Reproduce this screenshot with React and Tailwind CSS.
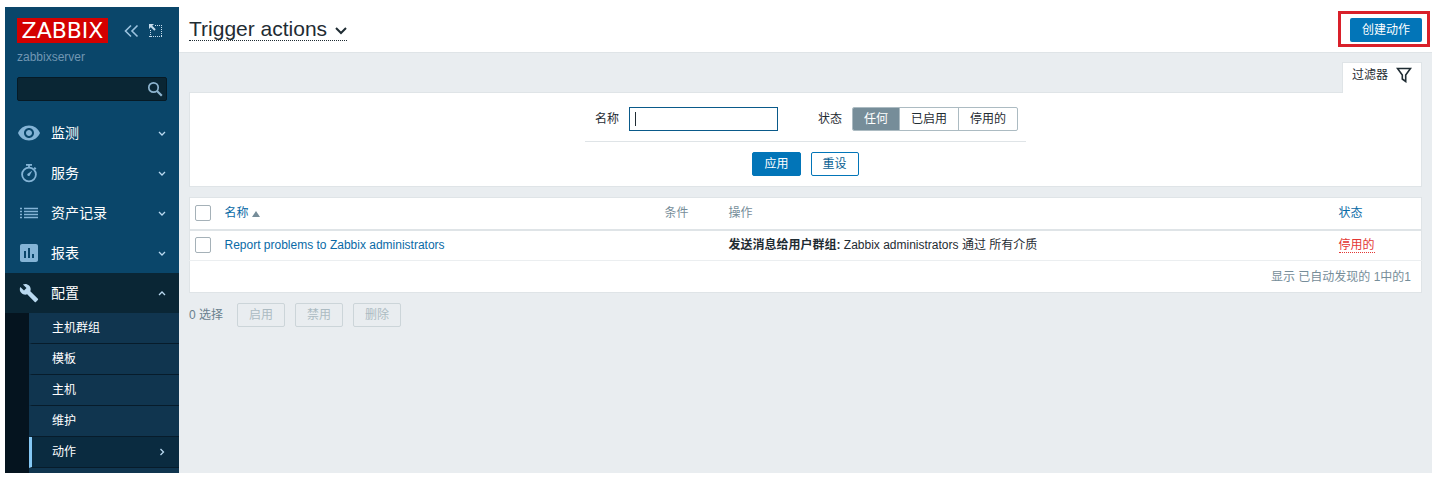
import { useState } from "react";
import clsx from "clsx";
import { MdAssessment, MdBuild, MdVisibility } from "react-icons/md";

// Stopwatch icon of the services section
function StopwatchIcon({ className }) {
  return (
    <svg viewBox="0 0 20 20" className={className} fill="none" stroke="currentColor">
      <circle cx="10" cy="11.5" r="6.9" strokeWidth="1.8" />
      <path d="M7 1.8h6M10 2v3M15.2 4.6l1.6 1.6" strokeWidth="1.8" />
      <path d="M8.400 11l5-3.600-2.800 5.400a1.500 1.500 0 0 1-2.200-1.800z" fill="currentColor" stroke="none" />
    </svg>
  );
}

// List icon of the inventory section
function ListIcon({ className }) {
  return (
    <svg viewBox="0 0 20 20" className={className} stroke="currentColor" strokeWidth="1.6">
      <path d="M1 5.500h2M1 8.500h2M1 11.500h2M1 14.500h2M5 5.500h14M5 8.500h14M5 11.500h14M5 14.500h14" />
    </svg>
  );
}

function Chevron({ className, d = "M1 3l3 3 3-3" }) {
  return (
    <svg viewBox="0 0 8 8" className={className} fill="none" stroke="currentColor" strokeWidth="1.3">
      <path d={d} />
    </svg>
  );
}

const menu = [
  { label: "监测", Icon: MdVisibility, iconClass: "size-6" },
  { label: "服务", Icon: StopwatchIcon, iconClass: "size-5" },
  { label: "资产记录", Icon: ListIcon, iconClass: "size-5" },
  { label: "报表", Icon: MdAssessment, iconClass: "size-6" },
  { label: "配置", Icon: MdBuild, iconClass: "size-5", open: true },
];

const subMenu = ["主机群组", "模板", "主机", "维护", "动作"];

const statuses = ["任何", "已启用", "停用的"];

// Left navigation
function Sidebar() {
  return (
    <aside className="flex w-[174px] shrink-0 flex-col bg-[#0a466a]">
      <div className="flex items-center px-3 pt-[11px]">
        <a
          href="#home"
          className="flex h-[25px] w-[91px] items-center justify-center bg-[#d40000] font-['DejaVu_Sans',sans-serif] text-[22px] leading-none text-white"
        >
          ZABBIX
        </a>
        <button aria-label="Collapse" className="ml-4 text-[#9cc3df]">
          <svg viewBox="0 0 15 14" className="h-3.5 w-[15px]" fill="none" stroke="currentColor" strokeWidth="1.6">
            <path d="M7 1.500L1.500 7 7 12.500M13.500 1.500L8 7l5.500 5.500" />
          </svg>
        </button>
        <button aria-label="Compact" className="ml-2.5 text-[#c5dcec]">
          <svg viewBox="0 0 13 13" className="size-[13px]" fill="none" stroke="currentColor">
            <path d="M6 1.500h7M12.500 1v12M13 12.500H0M1.500 13V6" strokeDasharray="1 1" />
            <path d="M1.500 1.500l4.500 4.500" strokeWidth="2" />
            <path d="M0 0h5L0 5z" fill="currentColor" stroke="none" />
          </svg>
        </button>
      </div>
      <p className="mt-1.5 px-3 leading-4 text-[#7197b3]">zabbixserver</p>
      <form className="relative mx-3 mt-3 mb-3">
        <input
          aria-label="Search"
          className="block h-6 w-full rounded-xs border border-[#061a25] bg-[#0a2634] px-1.5 pr-7 text-white outline-none"
        />
        <button type="button" aria-label="Search" className="absolute top-1 right-1 text-[#8db4cf]">
          <svg viewBox="0 0 16 16" className="size-4" fill="none" stroke="currentColor">
            <circle cx="6.500" cy="6.500" r="4.700" strokeWidth="1.700" />
            <path d="M9.800 9.800l5 5" strokeWidth="2.200" />
          </svg>
        </button>
      </form>
      <nav className="flex flex-1 flex-col">
        {menu.map(({ label, Icon, iconClass, open }) => (
          <a
            key={label}
            href="#menu"
            className={clsx(
              "flex h-10 items-center px-3 text-sm text-white",
              open && "bg-[#0a2635]"
            )}
          >
            <span className="flex w-6 justify-center">
              <Icon className={clsx(iconClass, open ? "text-[#b9d9f0]" : "text-[#84b4d6]")} />
            </span>
            <span className="ml-2.5 flex-1">{label}</span>
            <Chevron
              className="mr-px size-2 text-[#b9d9f0]"
              d={open ? "M1 6l3-3 3 3" : undefined}
            />
          </a>
        ))}
        {/* Submenu of the open section */}
        <div className="flex flex-1 flex-col bg-[#05141f] pl-6">
          {subMenu.map((label) => {
            const active = label === "动作";
            return (
              <a
                key={label}
                href="#submenu"
                className={clsx(
                  "flex h-[31px] items-center border-b border-b-[#071c2b] border-l-3 pr-[13px] pl-5 text-white",
                  active ? "border-l-[#85c8f5] bg-[#0a2b40]" : "border-l-[#10354f] bg-[#10354f]"
                )}
              >
                <span className="flex-1">{label}</span>
                {active && <Chevron className="size-2 text-[#b9d9f0]" d="M2.500 1l3 3-3 3" />}
              </a>
            );
          })}
          <div className="flex-1 bg-[#10354f]" />
        </div>
      </nav>
    </aside>
  );
}

// Filter tab and the filter form below it
function Filter() {
  const [name, setName] = useState("");
  const [status, setStatus] = useState("任何");

  return (
    <section className="flex flex-col pt-[9px]">
      <button className="z-10 -mb-px flex h-[31px] items-center gap-2 self-end border border-b-0 border-[#dfe4e7] bg-white px-[9px] pb-1.5">
        过滤器
        <svg viewBox="0 0 16 16" className="size-4" fill="none" stroke="currentColor" strokeWidth="1.6">
          <path d="M1.500 1.500h13L9.700 8v6.500L6.300 12V8z" />
        </svg>
      </button>
      <form className="border border-[#dfe4e7] bg-white pt-3.5 pb-2.5">
        <div className="mx-auto flex w-[441px] items-center border-b border-[#dfe4e7] px-2.5 pb-2.5 whitespace-nowrap">
          <label htmlFor="name">名称</label>
          <div className="relative ml-2.5">
            <input
              id="name"
              value={name}
              onChange={(e) => setName(e.target.value)}
              className="peer block h-6 w-[149px] border border-[#0a5a8a] px-[5px] outline-none"
            />
            {/* Text cursor of the empty field */}
            {!name && (
              <span className="pointer-events-none absolute top-[5px] left-1.5 h-3.5 w-px bg-[#1f2c33] peer-focus:hidden" />
            )}
          </div>
          <fieldset className="ml-10 flex items-center">
            <legend className="float-left mr-2.5">状态</legend>
            <div className="flex h-6 divide-x divide-[#acbbc2] overflow-hidden rounded-xs border border-[#acbbc2]">
              {statuses.map((item) => (
                <label
                  key={item}
                  className="flex cursor-pointer items-center px-[11px] has-checked:bg-[#768d99] has-checked:text-white"
                >
                  <input
                    type="radio"
                    name="status"
                    className="sr-only"
                    checked={status === item}
                    onChange={() => setStatus(item)}
                  />
                  {item}
                </label>
              ))}
            </div>
          </fieldset>
        </div>
        <div className="mt-2.5 flex justify-center gap-2.5">
          <button
            type="button"
            className="h-6 rounded-xs border border-[#0275b8] bg-[#0275b8] px-[11px] text-white"
          >
            应用
          </button>
          <button
            type="reset"
            className="h-6 rounded-xs border border-[#0275b8] bg-white px-[11px] text-[#0a5f93]"
          >
            重设
          </button>
        </div>
      </form>
    </section>
  );
}

function Checkbox({ label }) {
  return (
    <input
      type="checkbox"
      aria-label={label}
      className="block size-4 appearance-none rounded-xs border border-[#a5b1b8] bg-white checked:bg-[#0275b8]"
    />
  );
}

// Table with the configured actions
function ActionsTable() {
  return (
    <table className="mt-2.5 w-full table-fixed border border-[#dfe4e7] bg-white text-left">
      <thead className="border-b-2 border-[#dfe4e7] text-[#768d99]">
        <tr className="h-8">
          <th className="w-[30px] px-[5px]">
            <Checkbox label="全选" />
          </th>
          <th className="w-[440px] px-[5px] font-normal">
            <a href="#sort" className="flex items-center gap-[3px] text-[#0a6aa6]">
              名称
              <svg viewBox="0 0 8 6" className="mt-0.5 h-1.5 w-2" fill="#768d99">
                <path d="M4 0l4 6H0z" />
              </svg>
            </a>
          </th>
          <th className="w-16 px-[5px] font-normal">条件</th>
          <th className="px-[5px] font-normal">操作</th>
          <th className="w-[88px] px-[5px] font-normal">
            <a href="#sort" className="text-[#0a6aa6]">
              状态
            </a>
          </th>
        </tr>
      </thead>
      <tbody>
        <tr className="h-[31px] border-b border-[#ebeef0]">
          <td className="px-[5px]">
            <Checkbox label="Report problems to Zabbix administrators" />
          </td>
          <td className="px-[5px]">
            <a href="#action" className="text-[#0a6aa6]">
              Report problems to Zabbix administrators
            </a>
          </td>
          <td />
          <td className="px-[5px]">
            <b>发送消息给用户群组:</b> Zabbix administrators 通过 所有介质
          </td>
          <td className="px-[5px]">
            <a href="#status" className="inline-block border-b border-dotted border-[#e33734] leading-[14px] text-[#e33734]">
              停用的
            </a>
          </td>
        </tr>
      </tbody>
      <tfoot>
        <tr className="h-8">
          <td colSpan={5} className="px-2.5 text-right text-[#768d99]">
            显示 已自动发现的 1中的1
          </td>
        </tr>
      </tfoot>
    </table>
  );
}

export default function App() {
  return (
    <div className="flex min-h-screen bg-white pt-[7px] pr-[11px] pb-3 pl-[5px] font-['Liberation_Sans','Noto_Sans_CJK_SC',sans-serif] text-xs text-[#1f2c33]">
      <Sidebar />
      <div className="flex min-w-0 flex-1 flex-col bg-[#e9edf0]">
        <header className="flex h-[46px] items-center justify-between border-b border-[#dfe4e7] bg-white px-2.5">
          <h1>
            <button className="flex items-center gap-2 border-b border-dotted border-[#1f2c33] text-[21px] leading-[22px]">
              Trigger actions
              <svg viewBox="0 0 12 8" className="mt-1 h-2 w-3" fill="none" stroke="currentColor" strokeWidth="2">
                <path d="M1 1l5 5 5-5" />
              </svg>
            </button>
          </h1>
          <div className="relative">
            <button className="block h-6 rounded-xs bg-[#0275b8] px-3 text-white">创建动作</button>
            {/* Highlight around the create button */}
            <span className="pointer-events-none absolute -top-[7px] -right-2 -bottom-[5px] -left-3 border-3 border-[#d9202a]" />
          </div>
        </header>
        <main className="px-2.5">
          <Filter />
          <ActionsTable />
          <div className="mt-2.5 flex items-center gap-2.5 text-[#68808d]">
            <span className="mr-1">0 选择</span>
            {["启用", "禁用", "删除"].map((label) => (
              <button
                key={label}
                disabled
                className="h-6 rounded-xs border border-[#ccd5d9] px-[11px] text-[#acbbc2]"
              >
                {label}
              </button>
            ))}
          </div>
        </main>
      </div>
    </div>
  );
}
